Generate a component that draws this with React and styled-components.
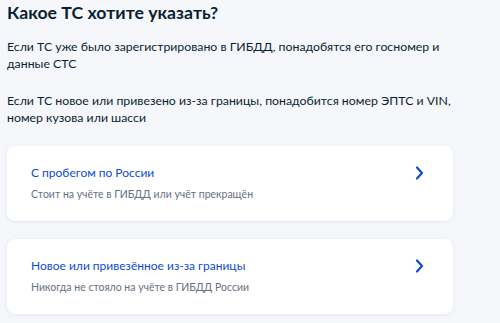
import React from "react";
import styled, { createGlobalStyle } from "styled-components";

const GlobalStyle = createGlobalStyle`
  html, body {
    margin: 0;
    padding: 0;
    background: #f5f7fb;
  }
  body {
    font-family: Lato, "Noto Sans", sans-serif;
    color: #0b1f33;
  }
`;

const Page = styled.div`
  width: 500px;
  height: 323px;
  box-sizing: border-box;
  padding: 3px 47px 0 7px;
  overflow: hidden;
`;

const Title = styled.h1`
  margin: 0 0 15px 0;
  font-size: 17.7px;
  line-height: 20px;
  font-weight: 700;
  color: #0b1f33;
`;

const Text = styled.p`
  margin: 0 0 20px 0;
  font-size: 12.3px;
  line-height: 17px;
  color: #0b1f33;
`;

const Options = styled.div`
  display: flex;
  flex-direction: column;
  gap: 18px;
  margin-top: 1px;
`;

const Card = styled.div`
  display: flex;
  align-items: flex-start;
  justify-content: space-between;
  height: 75px;
  box-sizing: border-box;
  padding: 19px 29px 0 24px;
  background: #ffffff;
  border-radius: 8px;
  box-shadow: 0 1px 4px rgba(100, 120, 160, 0.12);
  cursor: pointer;
`;

const CardBody = styled.div`
  display: flex;
  flex-direction: column;
  gap: 6px;
`;

const CardTitle = styled.span`
  font-size: 12px;
  line-height: 16px;
  color: #0d4cd3;
`;

const CardHint = styled.span`
  font-size: 10.5px;
  line-height: 14px;
  color: #66727f;
`;

const Chevron = styled.svg`
  margin-top: 1px;
  flex: none;
`;

const Arrow = () => (
  <Chevron width="9" height="14" viewBox="0 0 9 14">
    <path
      d="M2 1.5 L7 7 L2 12.5"
      fill="none"
      stroke="#0d4cd3"
      strokeWidth="2.2"
      strokeLinecap="round"
      strokeLinejoin="round"
    />
  </Chevron>
);

const options = [
  {
    title: "С пробегом по России",
    hint: "Стоит на учёте в ГИБДД или учёт прекращён",
  },
  {
    title: "Новое или привезённое из-за границы",
    hint: "Никогда не стояло на учёте в ГИБДД России",
  },
];

export default function App() {
  return (
    <>
      <GlobalStyle />
      <Page>
        <Title>Какое ТС хотите указать?</Title>
        <Text>
          Если ТС уже было зарегистрировано в ГИБДД, понадобятся его госномер и
          данные СТС
        </Text>
        <Text>
          Если ТС новое или привезено из-за границы, понадобится номер ЭПТС и
          VIN, номер кузова или шасси
        </Text>
        <Options>
          {options.map((o) => (
            <Card key={o.title}>
              <CardBody>
                <CardTitle>{o.title}</CardTitle>
                <CardHint>{o.hint}</CardHint>
              </CardBody>
              <Arrow />
            </Card>
          ))}
        </Options>
      </Page>
    </>
  );
}
